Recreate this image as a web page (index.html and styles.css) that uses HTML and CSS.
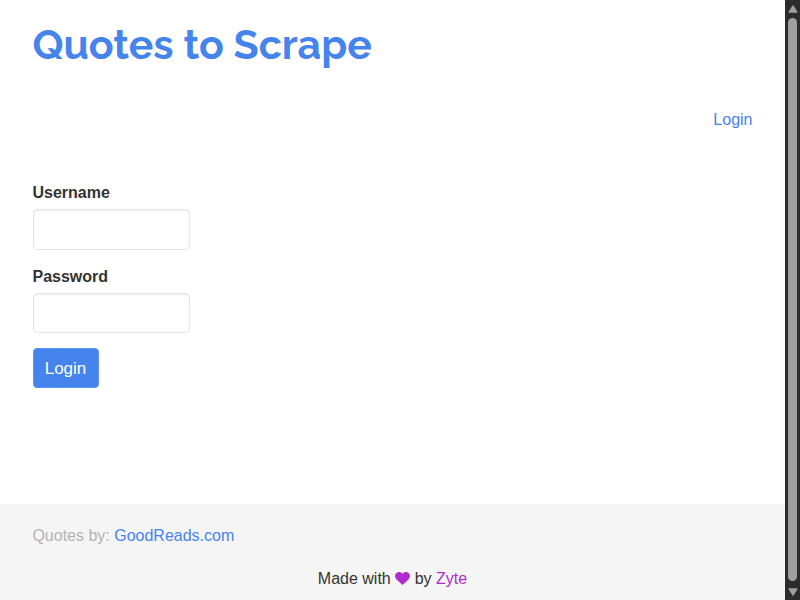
FILE: index.html
```
<!DOCTYPE html>
<html lang="en">
<head>
<meta charset="utf-8">
<title>Quotes to Scrape</title>
<link rel="stylesheet" href="styles.css">
</head>
<body>
<div class="page">
  <main class="content">
    <h1><a href="#">Quotes to Scrape</a></h1>
    <nav><a href="#">Login</a></nav>
    <form>
      <label for="username">Username</label>
      <input type="text" id="username">
      <label for="password">Password</label>
      <input type="password" id="password">
      <button type="button">Login</button>
    </form>
  </main>
  <footer>
    <p class="quotes">Quotes by: <a href="#">GoodReads.com</a></p>
    <p class="made">Made with <svg class="heart" viewBox="0 0 15 13"><path d="M7.5 13 1.5 7.4C-.5 5.4-.2 2.4 1.5 1 3.2-.5 6-.3 7.5 2 9-.3 11.8-.5 13.5 1c1.7 1.4 2 4.4 0 6.4Z"/></svg> by <a class="zyte" href="#">Zyte</a></p>
  </footer>
</div>
<div class="scrollbar" aria-hidden="true">
  <svg class="arrow" viewBox="0 0 10 8"><path d="M5 .5 9.2 7.2H.8Z"/></svg>
  <div class="thumb"></div>
  <svg class="arrow" viewBox="0 0 10 8"><path d="M.8.8H9.2L5 7.5Z"/></svg>
</div>
</body>
</html>
```
FILE: styles.css
```
* { box-sizing: border-box; }
body {
  margin: 0;
  height: 600px;
  display: flex;
  overflow: hidden;
  font: 16px/24px "Liberation Sans", Arial, sans-serif;
  color: #333;
  background: #fff;
}
a { color: #4583ed; text-decoration: none; }
.page { flex: 1; display: flex; flex-direction: column; }
.content { height: 504px; padding: 21px 32.5px 0; }
h1 {
  margin: 0;
  font: bold 41px/48px Raleway, Lato, sans-serif;
  white-space: nowrap;
}
nav { margin-top: 39px; text-align: right; }
form { display: flex; flex-direction: column; align-items: flex-start; margin-top: 49px; }
label { font-weight: bold; margin-bottom: 4px; }
input {
  width: 157px;
  height: 41px;
  margin: 0 0 15px;
  border: 1px solid #e6e6e6;
  border-radius: 4px;
  box-shadow: inset 0 1px 2px rgba(0, 0, 0, .08);
  background: #fff;
}
#password { height: 40px; }
button {
  width: 66px;
  height: 40px;
  padding: 2px 0 0;
  border: 1px solid #5b92ef;
  border-radius: 4px;
  background: #4583ed;
  color: #fff;
  font: 17px/24px "Liberation Sans", Arial, sans-serif;
}
footer { flex: 1; padding: 20px 32.4px 0; background: #f5f5f5; }
footer p { margin: 0; }
.quotes { color: #b3b3b3; }
footer .made { margin-top: 19px; text-align: center; }
.heart { width: 15px; height: 13px; vertical-align: -1px; fill: #b02ccf; }
.zyte { color: #b02ccf; }
.scrollbar {
  width: 15px;
  display: flex;
  flex-direction: column;
  align-items: center;
  gap: 5px;
  padding: 5px 0 4px;
  background: #2c2c2c;
}
.arrow { flex: none; width: 10px; height: 8px; fill: #9f9f9f; stroke: #9f9f9f; stroke-width: 1; stroke-linejoin: round; }
.thumb { flex: 1; width: 9px; margin-bottom: 2px; border-radius: 5px; background: #9f9f9f; }
```
